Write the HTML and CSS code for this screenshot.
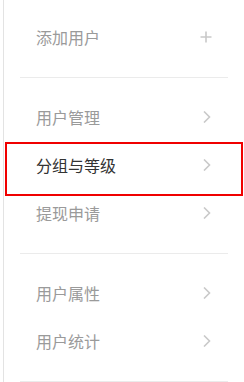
FILE: index.html
```html
<!DOCTYPE html>
<html lang="zh-CN">
<head>
  <meta charset="UTF-8" />
  <meta name="viewport" content="width=device-width, initial-scale=1.0" />
  <title>用户</title>
  <link rel="stylesheet" href="styles.css">
</head>
<body>
  <div class="menu">
    <div class="group first">
      <div class="item">
        <span>添加用户</span>
        <svg class="icon" viewBox="0 0 12 12"><path d="M6 0.5V11.5M0.5 6H11.5" /></svg>
      </div>
    </div>

    <div class="group">
      <div class="item">
        <span>用户管理</span>
        <svg class="icon" viewBox="0 0 12 12"><path d="M4 0.5L9.5 6L4 11.5" /></svg>
      </div>
      <div class="item active">
        <span>分组与等级</span>
        <svg class="icon" viewBox="0 0 12 12"><path d="M4 0.5L9.5 6L4 11.5" /></svg>
      </div>
      <div class="item">
        <span>提现申请</span>
        <svg class="icon" viewBox="0 0 12 12"><path d="M4 0.5L9.5 6L4 11.5" /></svg>
      </div>
    </div>

    <div class="group">
      <div class="item">
        <span>用户属性</span>
        <svg class="icon" viewBox="0 0 12 12"><path d="M4 0.5L9.5 6L4 11.5" /></svg>
      </div>
      <div class="item">
        <span>用户统计</span>
        <svg class="icon" viewBox="0 0 12 12"><path d="M4 0.5L9.5 6L4 11.5" /></svg>
      </div>
    </div>

    <div class="highlight"></div>
  </div>
</body>
</html>
```

FILE: styles.css
```css
body, html {
  margin: 0;
  padding: 0;
  height: 100%;
  overflow: hidden;
  background: #fff;
  font-family: "Noto Sans CJK SC", "Noto Sans", sans-serif;
}
.menu {
  position: relative;
  margin-left: 3px;
  height: 100%;
  border-left: 1px solid #e3e3e3;
}
.group {
  margin: 0 16px;
  padding: 16px 0 15px;
  border-bottom: 1px solid #ebebeb;
}
.group.first {
  padding-top: 14px;
}
.item {
  display: flex;
  align-items: center;
  justify-content: space-between;
  height: 46px;
  padding: 0 16px 2px;
  font-size: 16px;
  color: #9a9a9a;
}
.item.active {
  color: #333;
}
.icon {
  width: 12px;
  height: 12px;
  fill: none;
  stroke: #c9c9c9;
  stroke-width: 1.6;
}
.highlight {
  position: absolute;
  top: 142px;
  left: 1px;
  width: 234px;
  height: 50px;
  border: 2px solid #f00000;
  pointer-events: none;
}
```
